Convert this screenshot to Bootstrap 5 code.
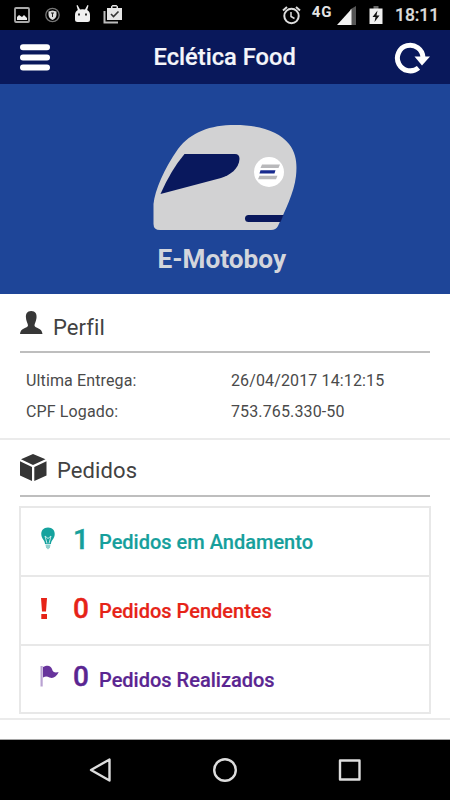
<!DOCTYPE html>
<html lang="pt-BR">
<head>
<meta charset="utf-8">
<meta name="viewport" content="width=device-width, initial-scale=1">
<title>Eclética Food</title>
<link href="https://cdn.jsdelivr.net/npm/bootstrap@5.3.0/dist/css/bootstrap.min.css" rel="stylesheet">
<style>
body{font-family:Roboto,"Liberation Sans",sans-serif;color:#424242;height:800px;overflow:hidden}
svg{display:block;flex:none}
.status{height:30px;padding:0 11px 0 14px;background:#000}
.net{font-size:15px;line-height:15px;font-weight:700;color:#e4e4e4;margin:-6px 4px 0 10px;letter-spacing:.7px}
.clock{font-size:17.5px;line-height:30px;font-weight:500;color:#dcdcdc;margin-left:12px;letter-spacing:-.1px;-webkit-text-stroke:.2px}
.topbar{height:54px;background:#09185b;padding:0 20px}
.topbar h1{font-size:23.7px;line-height:54px;font-weight:500;color:#f4f5fa;width:137px;white-space:nowrap;-webkit-text-stroke:.2px}
.reload{margin-right:-1px}
.hero{height:210px;background:#1e4598;padding-top:40px}
.hero h2{font-size:26.2px;line-height:30px;font-weight:700;color:#d3d5dc;margin-top:14px;width:135px;white-space:nowrap}
.sect{border-bottom:2px solid #ebebeb;padding:0 20px}
.perfil{height:146px}
.pedidos{height:280px}
.sect-title{height:59px;border-bottom:2px solid #bebebe}
.pedidos .sect-title{height:57px}
.sect-title h3{font-size:22px;line-height:26px;font-weight:400;letter-spacing:.1px}
.perfil h3{margin-left:10px;padding-top:10px}
.pedidos h3{margin-left:10px;padding-top:6px}
.info{font-size:16px;line-height:31px;padding:12px 0 0 6px;letter-spacing:.13px;color:#4a4a4a}
.info dt{width:205px;font-weight:400}
.orders{margin:9px -1px 0;border-radius:0}
.orders .list-group-item{height:69px;border:2px solid #e8e8e8;border-bottom-width:0;padding:0 0 0 17px}
.orders .list-group-item:last-child{border-bottom-width:2px;height:70px}
.ico{width:35px;margin-top:-6px}
.qty{font-size:28px;line-height:32px;font-weight:500;width:26px;margin-top:-4px;-webkit-text-stroke:.4px}
.lbl{font-size:20px;line-height:32px;font-weight:500;white-space:nowrap;margin-top:1px;-webkit-text-stroke:.2px}
.teal{color:#169f9c}.red{color:#e62317}.purple{color:#5a2591}
.tail{height:20px;border-bottom:1px solid #a5a5a5}
.navkeys{height:60px;background:#000}
</style>
</head>
<body class="bg-white d-flex flex-column">
<div class="status d-flex align-items-center flex-shrink-0">
  <svg width="112" height="30" viewBox="14 0 112 30">
    <g fill="none" stroke="#aaa" stroke-width="1.800"><rect x="15" y="8" width="14" height="14" rx="1"/></g>
    <path fill="#eee" d="M17 20v-3l2-2 3 2 2-2 3 3v2z"/>
    <circle cx="52.500" cy="15" r="6.700" fill="none" stroke="#777" stroke-width="1.300"/>
    <path fill="#ddd" d="M48.500 11.500l4-1 4 1v3q0 3.500-4 5.500-4-2-4-5.500z"/><path stroke="#222" d="M52.500 13v4M51 13h3"/>
    <path fill="#f0f0f0" d="M77.500 5l2.500 4.500q2.500-.5 5 0l2.500-4.500 1 .5-1.300 4.500q2.800 1.500 2.800 5v4.500q0 2.500-2.500 2.500h-10q-2.500 0-2.500-2.500v-4.500q0-3.500 2.800-5L76.500 5.500z"/>
    <path fill="#333" d="M78 13.500h2v2h-2zM85 13.500h2v2h-2z"/>
    <path fill="none" stroke="#bbb" stroke-width="2" d="M104.500 11v11.500H118"/>
    <path fill="#e6e6e6" d="M107 8h4V6.500L112.500 5h4l1.500 1.500V8h4v12h-15zM112.500 6.500V8h4V6.500z"/>
    <path fill="none" stroke="#333" stroke-width="1.600" d="M111 14l2.500 2.500 5-5"/>
  </svg>
  <svg class="ms-auto" width="20" height="30" viewBox="282 0 20 30" fill="none" stroke="#ddd" stroke-width="2">
    <circle cx="291.500" cy="16" r="7.200"/><path d="M283 10.500l4-3.500M300 10.500L296 7"/><path stroke-width="1.500" d="M291 12v4.500l3.500 2"/>
  </svg>
  <div class="net">4G</div>
  <svg width="47" height="30" viewBox="337 0 47 30">
    <path fill="#555" d="M351 9.500L357 6v19h-6z"/><path fill="#f2f2f2" d="M338 25L352.500 9v16z"/>
    <path fill="#666" d="M374.500 6h5v3h-5z"/><path fill="#f0f0f0" d="M370.500 8.500h13V24h-13z"/>
    <path fill="#111" d="M378.500 10.500l-5 6.500h3l-1 5 5-6.500h-3z"/>
  </svg>
  <div class="clock">18:11</div>
</div>
<header class="topbar d-flex align-items-center justify-content-between flex-shrink-0">
  <svg width="30" height="54" viewBox="0 0 30 54" stroke="#fff" stroke-width="6" stroke-linecap="round"><path d="M3 17.200h24M3 27.500h24M3 37.600h24"/></svg>
  <h1 class="m-0 ms-auto">Eclética Food</h1>
  <svg class="ms-auto reload" width="37" height="54" viewBox="394 30 37 54"><path fill="none" stroke="#fff" stroke-width="5" d="M423 57.500A12.800 12.800 0 1 0 418.500 67.800"/><path fill="#fff" d="M414.500 56.500h15.500l-8 9z"/></svg>
</header>
<section class="hero d-flex flex-column align-items-center flex-shrink-0">
  <svg width="144" height="106" viewBox="153 124 144 106">
    <path fill="#d2d2d3" d="M153.500 224V204C155 190 164 169 178 149C191 132 210 125 235 125C259 125 279 131 289 144C297 154 297 166 296 176C294 193 285 211 278 226Q276 230 271 230H160Q153.500 230 153.500 224Z"/>
    <path fill="#09185d" d="M184.500 154H235Q239.500 154 239.500 159C239 169 230 175 221 178L160.500 194Q171 170 184.500 154Z"/>
    <circle cx="269" cy="172" r="15" fill="#fff"/>
    <path fill="#b9b9bb" d="M262 164.500h18l-1.500 3.500h-18zM259.500 175.800h18l-1.500 3.500h-18z"/><path fill="#172a8e" d="M260.500 170.200h15l-1 3.300h-15z"/>
    <path fill="#09185d" d="M248.500 215H283.500L280.500 222H248.500a3.500 3.500 0 0 1 0-7z"/>
  </svg>
  <h2 class="mb-0">E-Motoboy</h2>
</section>
<section class="sect perfil flex-shrink-0">
  <div class="sect-title d-flex align-items-center">
    <svg width="23" height="24" viewBox="20 312 23 24"><path fill="#373737" d="M31.200 312C35.500 312 37 315 36.500 319C36 323 34.500 324.500 34.500 326.500C35 329.500 42 328.500 42.500 335H20C20.500 328.500 27.500 329.500 28 326.500C28 324.500 26.400 323 26 319C25.500 315 27 312 31.200 312Z"/></svg>
    <h3 class="mb-0">Perfil</h3>
  </div>
  <dl class="info mb-0">
    <div class="d-flex"><dt>Ultima Entrega:</dt><dd class="m-0">26/04/2017 14:12:15</dd></div>
    <div class="d-flex"><dt>CPF Logado:</dt><dd class="m-0">753.765.330-50</dd></div>
  </dl>
</section>
<section class="sect pedidos flex-shrink-0">
  <div class="sect-title d-flex align-items-center">
    <svg width="27" height="28" viewBox="20 454 27 28" fill="#353535"><path d="M33 454L45.500 459.200 33 465 21 459.200zM20 461.300L32 467V481L20 475.500zM46.500 461.300L34.300 467V481L46.500 475.500z"/></svg>
    <h3 class="mb-0">Pedidos</h3>
  </div>
  <ul class="orders list-group">
    <li class="list-group-item d-flex align-items-center teal">
      <span class="ico"><svg width="20" height="24" viewBox="37 527 20 24"><path fill="#15a29e" d="M47 527.500C51.500 527.500 54 530.500 53.700 534.500C53.500 539 50 540 50 544H44C44 540 40.500 539 40.300 534.500C40 530.500 42.500 527.500 47 527.500Z"/><path fill="none" stroke="#d5efee" stroke-width=".9" d="M46 543.500L44 536l3 2.500 3-2.500-2 7.500"/><path fill="#8fcfcd" d="M44.500 544.500h5l-.5 3-2 2-2-2z"/></svg></span>
      <span class="qty">1</span><span class="lbl">Pedidos em Andamento</span>
    </li>
    <li class="list-group-item d-flex align-items-center red">
      <span class="ico"><svg width="20" height="24" viewBox="37 595 20 24"><path fill="#e62317" d="M40 597h6l-1 13.500h-4zM40.300 613h5.700v5h-5.700z"/></svg></span>
      <span class="qty">0</span><span class="lbl">Pedidos Pendentes</span>
    </li>
    <li class="list-group-item d-flex align-items-center purple">
      <span class="ico"><svg width="22" height="24" viewBox="37 664 22 24"><path fill="#b9a2d2" d="M39.500 666h2.200v20.500h-2.200z"/><path fill="#68349c" d="M42 667C47 664.500 50 666 51 669C52 673 54 672.500 57.700 672.300C55 677 52 679 48.500 677.500C46 676 44.500 676 42 677.500Z"/></svg></span>
      <span class="qty">0</span><span class="lbl">Pedidos Realizados</span>
    </li>
  </ul>
</section>
<div class="tail flex-shrink-0"></div>
<nav class="navkeys flex-shrink-0 d-flex justify-content-center">
  <svg width="450" height="60" viewBox="0 740 450 60" fill="none" stroke="#ddd" stroke-width="2.400" stroke-linejoin="round"><path d="M109.500 759.500v21L91 770z"/><circle cx="225" cy="770" r="10.800"/><rect x="340" y="760.500" width="19.500" height="19"/></svg>
</nav>
<script src="https://cdn.jsdelivr.net/npm/bootstrap@5.3.0/dist/js/bootstrap.bundle.min.js"></script>
</body>
</html>
